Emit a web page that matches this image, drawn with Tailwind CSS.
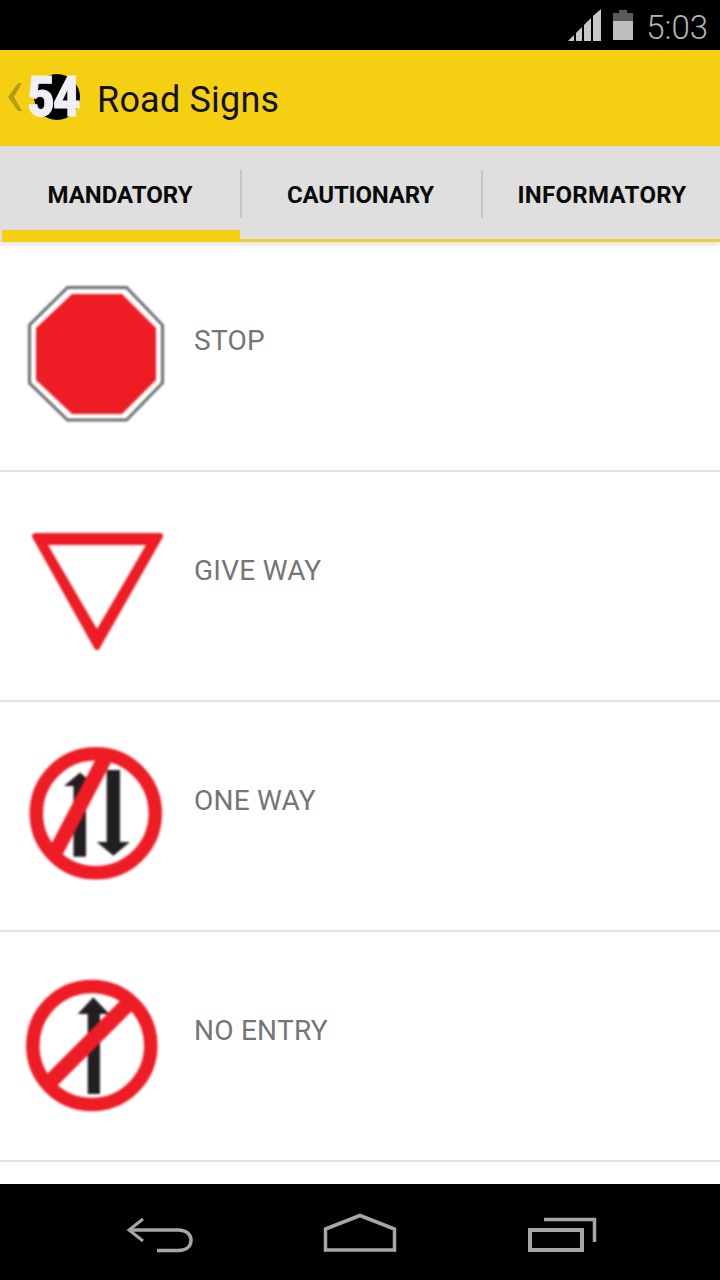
<!doctype html>
<html>
  <head>
    <meta charset="UTF-8" />
    <meta name="viewport" content="width=device-width, initial-scale=1.0" />
    <script src="https://cdn.jsdelivr.net/npm/@tailwindcss/browser@4"></script>
  </head>
  <body class="bg-white font-[Roboto,sans-serif]">
    <div class="w-[720px] h-[1280px] flex flex-col overflow-hidden">

      <!-- status bar -->
      <div class="h-[50px] shrink-0 bg-black flex items-center justify-end pr-[12px]">
        <svg class="w-[36px] h-[34px] mt-[-1px]" viewBox="0 0 36 34">
          <polygon points="1,33 7,27 7,33" fill="#c8c8c8" />
          <polygon points="9,25 15,19 15,33 9,33" fill="#c8c8c8" />
          <polygon points="17,17 24,10 24,33 17,33" fill="#c8c8c8" />
          <polygon points="26,8 34,1 34,33 26,33" fill="#c8c8c8" />
        </svg>
        <svg class="w-[22px] h-[32px] ml-[9px] mt-[-1px]" viewBox="0 0 22 32">
          <path d="M1 4h6V1h8v3h6v8H1z" fill="#5a5a5a" />
          <rect x="1" y="12" width="20" height="19" fill="#bdbdbd" />
        </svg>
        <span class="ml-[12px] mt-[4px] text-[33px] leading-none font-light text-[#b4b4b4]">5:03</span>
      </div>

      <!-- app bar -->
      <div class="h-[96px] shrink-0 bg-[#f5d012] flex items-center pl-[8px]">
        <svg class="w-[15px] h-[30px] mt-[-2px]" viewBox="0 0 15 30">
          <polygon points="10,1 14,1 6,15 14,29 10,29 0,15" fill="#b39b12" />
        </svg>
        <div class="relative w-[52px] h-[48px] ml-[6px] mt-[2px] shrink-0">
          <div class="absolute right-[1px] top-[-1px] w-[46px] h-[46px] rounded-full bg-black"></div>
          <span class="absolute left-[-8px] top-[-6px] w-[64px] text-center text-[55px] leading-[56px] font-black text-[#eef0f3] scale-x-[0.86] tracking-[-2px] [-webkit-text-stroke:1px_#eef0f3]">54</span>
        </div>
        <span class="ml-[16px] mt-[4px] text-[36px] leading-none tracking-[0.2px] text-[#111]">Road Signs</span>
      </div>

      <!-- tabs -->
      <div class="relative z-10 h-[96px] shrink-0 bg-[#dfdfdf] flex items-center shadow-[0_3px_6px_rgba(0,0,0,0.12)]">
        <div class="relative w-[240px] h-full flex items-center justify-center pt-[2px] text-[24px] font-bold text-[#0a0a0a]">
          MANDATORY
          <div class="absolute left-[2px] right-0 bottom-0 h-[12px] bg-[#f5d012]"></div>
        </div>
        <div class="w-[2px] h-[48px] bg-[#c6c6c6] shrink-0"></div>
        <div class="relative w-[239px] h-full flex items-center justify-center pt-[2px] pr-[2px] text-[24px] tracking-[-0.2px] font-bold text-[#0a0a0a]">
          CAUTIONARY
          <div class="absolute left-[-2px] right-[-2px] bottom-0 h-[3px] bg-[#f0cf2c]"></div>
        </div>
        <div class="w-[2px] h-[48px] bg-[#c6c6c6] shrink-0"></div>
        <div class="relative flex-1 h-full flex items-center justify-center pt-[2px] pl-[1px] text-[24px] tracking-[0.3px] font-bold text-[#0a0a0a]">
          INFORMATORY
          <div class="absolute left-0 right-0 bottom-0 h-[3px] bg-[#f0cf2c]"></div>
        </div>
      </div>

      <!-- sign list -->
      <div class="flex-1 overflow-hidden bg-white">
        <div class="h-[230px] border-b-2 border-[#e2e2e2] flex items-start">
          <svg class="w-[170px] h-[170px] ml-[10px] mt-[28px] shrink-0 blur-[0.8px]" viewBox="0 0 170 170">
            <polygon points="57.5,17.5 116.5,17.5 152.5,55 152.5,113 116.5,150 57.5,150 19.5,113 19.5,55" fill="#fff" stroke="#6e6e6e" stroke-width="3" />
            <polygon points="62,24 112,24 146,58 146,110 112,144 62,144 26,110 26,58" fill="#ee1c25" />
          </svg>
          <span class="ml-[14px] mt-[83px] text-[28px] leading-[32px] tracking-[0.25px] text-[#757575]">STOP</span>
        </div>

        <div class="h-[230px] border-b-2 border-[#e2e2e2] flex items-start">
          <svg class="w-[170px] h-[140px] ml-[10px] mt-[48px] shrink-0 blur-[0.8px]" viewBox="0 0 170 140">
            <polygon points="25,16 150,16 87,127" fill="#ee1c25" stroke="#ee1c25" stroke-width="6" stroke-linejoin="round" />
            <polygon points="38,25 136,25 87,109" fill="#fff" />
          </svg>
          <span class="ml-[14px] mt-[83px] text-[28px] leading-[32px] tracking-[0.25px] text-[#757575]">GIVE WAY</span>
        </div>

        <div class="h-[230px] border-b-2 border-[#e2e2e2] flex items-start">
          <svg class="w-[170px] h-[155px] ml-[10px] mt-[33px] shrink-0 blur-[0.8px]" viewBox="0 0 170 155">
            <polygon points="70,37.5 54,51 63.5,51 63.5,121.7 76,121.7 76,51 86,51" fill="#231f20" />
            <polygon points="96.7,35 110,35 110,107 120,107 103.4,120.7 86.7,107 96.7,107" fill="#231f20" />
            <line x1="97" y1="19" x2="44" y2="120" stroke="#ee1c25" stroke-width="15" />
            <circle cx="85.8" cy="78.3" r="59.5" fill="none" stroke="#ee1c25" stroke-width="13.5" />
          </svg>
          <span class="ml-[14px] mt-[83px] text-[28px] leading-[32px] tracking-[0.25px] text-[#757575]">ONE WAY</span>
        </div>

        <div class="h-[230px] border-b-2 border-[#e2e2e2] flex items-start">
          <svg class="w-[170px] h-[155px] ml-[10px] mt-[33px] shrink-0 blur-[0.8px]" viewBox="0 0 170 155">
            <polygon points="83.3,32.3 99.3,49 90,49 90,129 77.7,129 77.7,49 67.7,49" fill="#231f20" />
            <line x1="122" y1="35" x2="38" y2="119" stroke="#ee1c25" stroke-width="15.5" />
            <circle cx="81.8" cy="80.5" r="59" fill="none" stroke="#ee1c25" stroke-width="13.5" />
          </svg>
          <span class="ml-[14px] mt-[83px] text-[28px] leading-[32px] tracking-[0.25px] text-[#757575]">NO ENTRY</span>
        </div>
      </div>

      <!-- nav bar -->
      <div class="relative h-[96px] shrink-0 bg-black">
        <svg class="absolute left-0 top-0 w-[720px] h-[96px]" viewBox="0 1184 720 96" fill="none" stroke="#a6a6a6">
          <path d="M143 1219 L129 1230 L143 1241" stroke-width="3" />
          <path d="M129 1230 H178 C187 1230 191 1235 191 1240 C191 1246 187 1250.5 178 1250.5 H157" stroke-width="3.5" />
          <path d="M325.5 1229 L360 1215.5 L394.5 1229 V1250 H325.5 Z" stroke-width="3.5" />
          <rect x="530" y="1230" width="52" height="20" stroke-width="4" />
          <path d="M544 1219.5 H594.5 V1242" stroke-width="3.5" />
        </svg>
      </div>
    </div>
  </body>
</html>
